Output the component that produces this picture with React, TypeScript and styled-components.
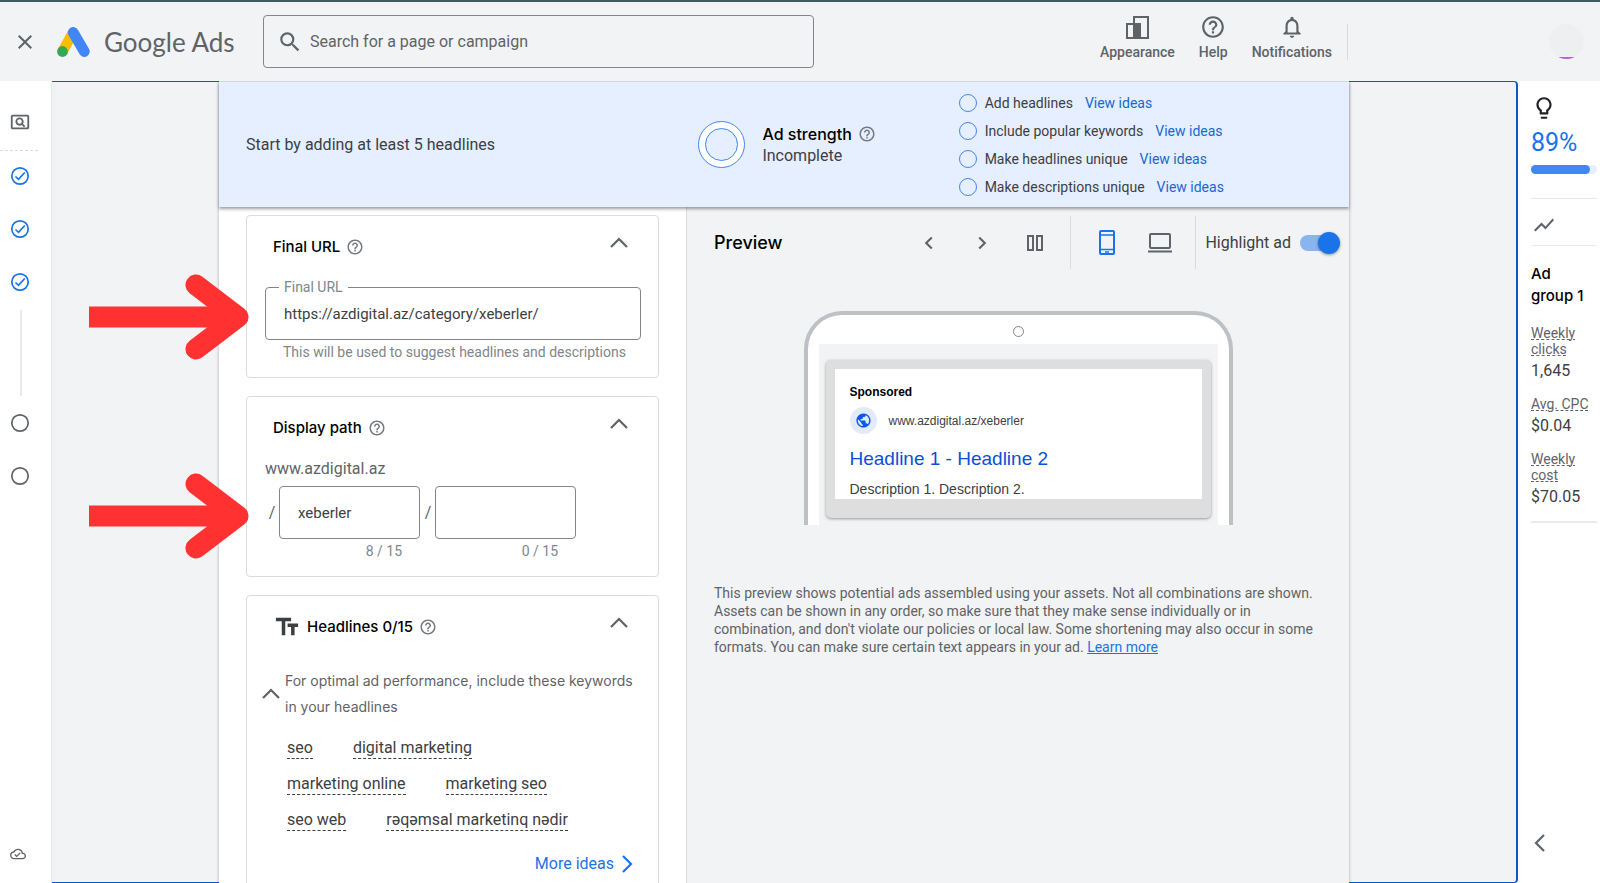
import React from 'react';
import styled, { createGlobalStyle, css } from 'styled-components';
import {
  MdClose,
  MdSearch,
  MdHelpOutline,
  MdNotificationsNone,
  MdOutlinePageview,
  MdOutlineCloudDone,
  MdOutlineLightbulb,
  MdShowChart,
  MdTextFields,
  MdPublic,
} from 'react-icons/md';

const color = {
  surface: '#f1f3f4',
  line: '#dadce0',
  softLine: '#e8eaed',
  text: '#3c4043',
  muted: '#5f6368',
  hint: '#80868b',
  blue: '#1a73e8',
  focus: '#0b57d0',
  tint: '#e6efff',
  arrow: '#ff3131',
};

const display = '"Inter", "Roboto", sans-serif';

const GlobalStyle = createGlobalStyle`
  *, *::before, *::after { box-sizing: border-box; }
  body {
    margin: 0;
    font-family: "Roboto", "Liberation Sans", sans-serif;
    font-size: 16px;
    color: ${color.text};
    background: #fff;
  }
  button, input { font: inherit; color: inherit; }
  a { text-decoration: none; color: ${color.blue}; }
  h1, h2, h3, p, ul, dl, dd { margin: 0; padding: 0; }
  svg { display: block; flex: none; }
`;

const Page = styled.div`
  display: flex;
  flex-direction: column;
  height: 100vh;
  overflow: hidden;
  border-top: 2px solid #3d5c5e;
`;

const IconButton = styled.button`
  display: flex;
  align-items: center;
  justify-content: center;
  padding: 0;
  border: 0;
  background: none;
  color: ${color.muted};
  cursor: pointer;
`;

/* Header */

const Header = styled.header`
  flex: none;
  display: flex;
  align-items: center;
  height: 79px;
  padding: 0 16px 0 13px;
  background: ${color.surface};
`;

const Brand = styled.a`
  display: flex;
  align-items: center;
  gap: 14px;
  width: 206px;
  margin-left: 20px;
  color: ${color.muted};
  font-family: "Lato", sans-serif;
  font-size: 26px;
  line-height: 32px;
  white-space: nowrap;
`;

const SearchBox = styled.label`
  display: flex;
  align-items: center;
  gap: 7px;
  flex: 0 1 551px;
  height: 53px;
  margin-right: auto;
  padding: 0 13px;
  border: 1px solid #80868b;
  border-radius: 4px;
  color: ${color.muted};

  input {
    flex: 1;
    min-width: 0;
    padding: 0;
    border: 0;
    outline: 0;
    background: none;
  }
  input::placeholder { color: ${color.muted}; opacity: 1; }
`;

const HeaderActions = styled.nav`
  display: flex;
  gap: 24px;
  padding: 0 15px 9px 0;
`;

const HeaderAction = styled.button`
  display: flex;
  flex-direction: column;
  align-items: center;
  gap: 3px;
  padding: 0;
  border: 0;
  background: none;
  color: ${color.muted};
  font-size: 14px;
  font-weight: 500;
  line-height: 18px;
`;

const HeaderDivider = styled.span`
  width: 1px;
  height: 36px;
  margin-right: 201px;
  background: ${color.line};
`;

const Avatar = styled.span`
  width: 35px;
  height: 35px;
  border-radius: 50%;
  background: linear-gradient(#eeeff1 33px, #b65fcf 33px);
`;

/* Frame around the editor */

const Body = styled.div`
  flex: 1;
  min-height: 0;
  display: flex;
`;

const StepRail = styled.nav`
  flex: none;
  display: flex;
  flex-direction: column;
  align-items: flex-start;
  width: 52px;
  padding: 30px 0 3px;
  border-right: 1px solid ${color.softLine};
`;

const RailItem = styled.button<{ $done?: boolean }>`
  display: flex;
  align-items: center;
  justify-content: center;
  width: 40px;
  height: 53px;
  padding: 0;
  border: 0;
  background: none;
  color: ${(p) => (p.$done ? color.blue : color.muted)};
`;

const RailTop = styled(RailItem)`
  height: 22px;
`;

const RailDash = styled.span`
  width: 38px;
  margin: 17px 0 -2px;
  border-top: 1px dashed ${color.line};
`;

const RailLine = styled.span`
  width: 2px;
  height: 86px;
  margin: 2px 0 0 20px;
  background: ${color.softLine};
`;

const RailFoot = styled(RailItem)`
  width: 36px;
  margin-top: auto;
`;

const Frame = styled.main`
  flex: 1;
  min-width: 0;
  display: flex;
  padding: 0 167px;
  background: ${color.surface};
  border: solid ${color.focus};
  border-width: 1px 2px 1px 0;
  border-radius: 0 4px 4px 0;
`;

const Editor = styled.div`
  flex: 1;
  min-width: 0;
  display: flex;
  flex-direction: column;
  margin: -1px 0;
  background: ${color.surface};
  border-top: 1px solid ${color.line};
  box-shadow: 0 0 3px rgba(60, 64, 67, 0.4);
  clip-path: inset(0 -4px 0 -140px);
`;

/* Ad strength banner */

const Strength = styled.section`
  position: relative;
  z-index: 1;
  flex: none;
  display: grid;
  grid-template-columns: 452fr 260fr 390fr;
  align-items: center;
  height: 125px;
  padding-left: 27px;
  background: ${color.tint};
  box-shadow: 0 2px 3px rgba(60, 64, 67, 0.5);

  a { color: #1967d2; }
`;

const StrengthMeter = styled.div`
  display: flex;
  align-items: center;
  gap: 17px;
  line-height: 22px;
`;

const Ring = styled.span`
  width: 47px;
  height: 47px;
  padding: 6px;
  border: 1px solid #4285f4;
  border-radius: 50%;
  background: #fff;

  &::before {
    content: '';
    display: block;
    height: 100%;
    border: 1px solid #4285f4;
    border-radius: 50%;
    background: ${color.tint};
  }
`;

const TitleText = styled.h2<{ $large?: boolean }>`
  display: flex;
  align-items: center;
  gap: 6px;
  color: #000;
  font-family: ${display};
  font-size: ${(p) => (p.$large ? 16 : 15)}px;
  font-weight: 500;
  line-height: 22px;

  svg { color: #74797e; }
`;

const Checklist = styled.ul`
  display: flex;
  flex-direction: column;
  gap: 8px;
  list-style: none;
  font-size: 14px;
  line-height: 20px;

  li { display: flex; align-items: center; }
  li::before {
    content: '';
    width: 18px;
    height: 18px;
    margin-right: 8px;
    border: 1px solid #4285f4;
    border-radius: 50%;
  }
  a { margin-left: 12px; }
`;

/* Form column */

const Columns = styled.div`
  flex: 1;
  min-height: 0;
  display: flex;
`;

const FormColumn = styled.form`
  flex: none;
  display: flex;
  flex-direction: column;
  gap: 18px;
  width: 467px;
  padding: 8px 27px 0;
  background: #fff;
`;

const Card = styled.section`
  position: relative;
  flex: none;
  padding: 0 17px 0 18px;
  border: 1px solid ${color.line};
  border-radius: 4px;
`;

const CardHead = styled.header`
  display: flex;
  align-items: center;
  justify-content: space-between;
  height: 62px;
  padding: 0 12px 0 8px;
`;

const Toggle = styled(IconButton)`
  align-self: flex-start;
  margin-top: 17px;
  height: 20px;
`;

const fieldBox = css`
  width: 100%;
  height: 53px;
  padding: 0 18px;
  border: 1px solid #80868b;
  border-radius: 4px;
  background: #fff;
  outline: 0;
  font-size: 15px;
`;

const Field = styled.div`
  position: relative;
  margin-top: 9px;

  input { ${fieldBox} }
  label {
    position: absolute;
    top: -9px;
    left: 14px;
    padding: 0 5px;
    background: #fff;
    color: ${color.hint};
    font-size: 14px;
    line-height: 18px;
  }
`;

const Hint = styled.p`
  padding: 2px 18px 15px;
  color: ${color.hint};
  font-size: 14px;
  line-height: 20px;
  white-space: nowrap;
`;

const Domain = styled.p`
  padding-bottom: 7px;
  color: ${color.muted};
  line-height: 20px;
`;

const PathRow = styled.div`
  display: flex;
  padding-bottom: 15px;
`;

const PathPart = styled.label`
  display: grid;
  grid-template-columns: 14px 141px;
  align-items: center;
  color: ${color.muted};

  & > span { text-align: center; }
  & + & { margin-left: 1px; }
  input { ${fieldBox} color: ${color.text}; }
  small {
    grid-column: 2;
    padding: 2px 18px 0;
    color: ${color.hint};
    font-size: 14px;
    line-height: 20px;
    text-align: right;
  }
`;

const Arrow = styled.svg`
  position: absolute;
  z-index: 2;
  right: calc(100% - 2px);
  top: 58px;
  pointer-events: none;
`;

const PathArrow = styled(Arrow)`
  top: 76px;
`;

const HeadlineTip = styled.div`
  display: flex;
  align-items: center;
  gap: 4px;
  margin: 10px -4px 0 -4px;
  color: ${color.muted};
  font-family: ${display};
  font-size: 14px;
  line-height: 26px;
`;

const Keywords = styled.ul`
  display: flex;
  flex-wrap: wrap;
  gap: 15px 40px;
  max-width: 330px;
  margin: 18px 0 0 22px;
  list-style: none;

  li { height: 21px; line-height: 20px; }
  button {
    padding: 0;
    border: 0;
    border-bottom: 1px dashed ${color.text};
    background: none;
    line-height: 20px;
    white-space: nowrap;
  }
`;

const MoreIdeas = styled.a`
  display: flex;
  align-items: center;
  justify-content: flex-end;
  gap: 3px;
  margin-top: 22px;
  padding-right: 4px;
  line-height: 22px;
`;

const CardTail = styled.div`
  height: 40px;
`;

/* Preview column */

const Preview = styled.section`
  flex: 1;
  min-width: 0;
  padding: 9px 27px 0;
  border-left: 1px solid ${color.line};
`;

const Toolbar = styled.div`
  display: flex;
  align-items: center;
  height: 53px;
  margin-right: -18px;

  h2 {
    margin-right: auto;
    color: #000;
    font-family: ${display};
    font-size: 18px;
    font-weight: 500;
  }
`;

const ToolGroup = styled.div`
  display: flex;
  align-items: center;
  height: 100%;
  padding: 0 9px;
  border-right: 1px solid ${color.line};

  button { width: 53px; height: 53px; }
`;

const Switch = styled.label`
  display: flex;
  align-items: center;
  gap: 9px;
  padding-left: 9px;
  white-space: nowrap;

  input {
    appearance: none;
    display: flex;
    align-items: center;
    justify-content: flex-end;
    width: 40px;
    height: 16px;
    margin: 0;
    border-radius: 8px;
    background: linear-gradient(#8ab4f0, #8ab4f0) left / 34px 16px no-repeat;
  }
  input::before {
    content: '';
    width: 22px;
    height: 22px;
    margin: -3px 0;
    border-radius: 50%;
    background: ${color.blue};
    box-shadow: 0 1px 3px rgba(0, 0, 0, 0.4);
  }
`;

const Phone = styled.div`
  width: 429px;
  height: 214px;
  margin: 42px auto 0;
  padding: 0 11px;
  background: #fff;
  border: 4px solid #bdc1c6;
  border-bottom: 0;
  border-radius: 38px 38px 0 0;
`;

const PhoneTop = styled.div`
  display: flex;
  align-items: center;
  justify-content: center;
  height: 29px;

  &::before {
    content: '';
    width: 11px;
    height: 11px;
    margin-top: 3px;
    border: 1px solid #80868b;
    border-radius: 50%;
  }
`;

const Screen = styled.div`
  height: 181px;
  padding: 16px 7px 0;
  background: ${color.surface};
`;

const AdShell = styled.div`
  height: 158px;
  padding: 9px;
  border-radius: 5px;
  background: #dedede;
  box-shadow: 0 1px 3px rgba(60, 64, 67, 0.5);
`;

const Ad = styled.article`
  height: 130px;
  padding: 14px 15px;
  background: #fff;
  overflow: hidden;
  font-family: "Liberation Sans", Arial, sans-serif;
  font-size: 12px;

  strong { display: block; color: #000; line-height: 18px; }
  h3 { margin-top: 13px; font-size: 19px; font-weight: 400; line-height: 24px; }
  h3 a { color: #0b4fd8; }
  p { margin-top: 8px; font-size: 14px; line-height: 20px; }
`;

const AdSource = styled.div`
  display: flex;
  align-items: center;
  gap: 12px;
  margin-top: 6px;

  span {
    display: flex;
    align-items: center;
    justify-content: center;
    width: 27px;
    height: 27px;
    border-radius: 50%;
    background: #e1ebfd;
    color: #0b57ea;
  }
`;

const Disclaimer = styled.p`
  padding: 59px 5px 0 0;
  color: ${color.muted};
  font-size: 14px;
  line-height: 18px;

  a { text-decoration: underline; }
`;

/* Right-hand summary */

const Summary = styled.aside`
  flex: none;
  display: flex;
  flex-direction: column;
  align-items: flex-start;
  width: 82px;
  padding: 14px 3px 30px 13px;
`;

const Score = styled.p`
  margin-top: 8px;
  color: ${color.blue};
  font-size: 25px;
  line-height: 28px;
`;

const Meter = styled.div`
  width: 100%;
  height: 9px;
  margin: 8px 0 24px;
  border-radius: 5px;
  background: ${color.tint};

  &::before {
    content: '';
    display: block;
    width: 89%;
    height: 100%;
    border-radius: 5px;
    background: #4285f4;
  }
`;

const Rule = styled.hr<{ $thick?: boolean }>`
  width: 100%;
  margin: 0;
  border: 0;
  border-top: ${(p) => (p.$thick ? 2 : 1)}px solid ${color.softLine};
`;

const ChartRow = styled.div`
  display: flex;
  align-items: center;
  height: 46px;
  padding: 6px 0 0 1px;
  color: ${color.muted};
`;

const GroupName = styled.h2`
  margin: 17px 0 18px;
  color: #000;
  font-family: ${display};
  font-size: 15px;
  font-weight: 500;
  line-height: 22px;
`;

const Stats = styled.dl`
  margin-bottom: 10px;

  dt {
    color: ${color.muted};
    font-size: 14px;
    line-height: 16px;
    text-decoration: underline dashed 1px;
    text-underline-offset: 1px;
    white-space: nowrap;
  }
  dd { margin-bottom: 11px; line-height: 28px; }
  dd:last-child { margin-bottom: 0; }
`;

const CollapseButton = styled(IconButton)`
  margin: auto 0 0 -1px;
`;

const HelpIcon = () => <MdHelpOutline size={18} aria-label="Help" />;

type Direction = 'up' | 'left' | 'right';
const chevronPath: Record<Direction, string> = {
  up: 'M2 14 L10 6 L18 14',
  left: 'M14 2 L6 10 L14 18',
  right: 'M6 2 L14 10 L6 18',
};

const Chevron = ({ to, size = 20 }: { to: Direction; size?: number }) => (
  <svg width={size} height={size} viewBox="0 0 20 20" fill="none" stroke="currentColor" strokeWidth={size < 20 ? 3 : 2.2} aria-hidden="true">
    <path d={chevronPath[to]} />
  </svg>
);

const arrowShape = (
  <g fill="none" stroke={color.arrow} strokeWidth="21">
    <path d="M0 43 H140" />
    <path d="M107 11 L149 43 L107 75" strokeLinecap="round" strokeLinejoin="round" />
  </g>
);

const AdsLogo = () => (
  <svg width="33" height="30" viewBox="0 0 33 30" aria-hidden="true">
    <path d="M5.500 24.500 L16 5.500" stroke="#fbbc04" strokeWidth="10.500" />
    <path d="M16.200 5.500 L27.300 24.500" stroke="#4285f4" strokeWidth="10.800" strokeLinecap="round" />
    <circle cx="5.500" cy="24.500" r="5.400" fill="#34a853" />
  </svg>
);

const AppearanceIcon = () => (
  <svg width="26" height="26" viewBox="0 0 26 26" aria-hidden="true">
    <path d="M10 3 H24 V24 H3 V10 H10 Z" fill="none" stroke="currentColor" strokeWidth="2" />
    <path d="M9 9 H17 V24 H9 Z" fill="currentColor" />
  </svg>
);

const ColumnsIcon = () => (
  <svg width="16" height="16" viewBox="0 0 16 16" fill="none" stroke="currentColor" strokeWidth="2" aria-hidden="true">
    <path d="M1 1 H6 V15 H1 Z M10 1 H15 V15 H10 Z" />
  </svg>
);

const PhoneIcon = () => (
  <svg width="16" height="25" viewBox="0 0 16 25" fill="none" stroke={color.blue} strokeWidth="2" aria-hidden="true">
    <rect x="1" y="1" width="14" height="23" rx="1" />
    <path d="M1 5 H15 M1 19.500 H15" strokeWidth="1.500" />
    <path d="M6 22 H10" strokeWidth="1.500" />
  </svg>
);

const LaptopIcon = () => (
  <svg width="24" height="20" viewBox="0 0 24 20" fill="none" stroke="currentColor" strokeWidth="2" aria-hidden="true">
    <rect x="2" y="1" width="20" height="14" rx="1" />
    <path d="M0 18.500 H24" />
  </svg>
);

const StepIcon = ({ done }: { done: boolean }) => (
  <svg width="20" height="20" viewBox="0 0 20 20" fill="none" stroke="currentColor" strokeWidth="1.700" aria-hidden="true">
    <circle cx="10" cy="10" r="8.200" />
    {done && <path d="M5.500 10.500 L8.500 13.300 L14.800 6.500" />}
  </svg>
);

const suggestions = ['Add headlines', 'Include popular keywords', 'Make headlines unique', 'Make descriptions unique'];
const keywords = ['seo', 'digital marketing', 'marketing online', 'marketing seo', 'seo web', 'rəqəmsal marketinq nədir'];

export default function App() {
  return (
    <>
      <GlobalStyle />
      <Page>
        <Header>
          <IconButton aria-label="Close">
            <MdClose size={24} />
          </IconButton>
          <Brand href="#">
            <AdsLogo />
            Google Ads
          </Brand>
          <SearchBox>
            <MdSearch size={26} />
            <input aria-label="Search" placeholder="Search for a page or campaign" />
          </SearchBox>
          <HeaderActions>
            <HeaderAction>
              <AppearanceIcon />
              Appearance
            </HeaderAction>
            <HeaderAction>
              <MdHelpOutline size={26} />
              Help
            </HeaderAction>
            <HeaderAction>
              <MdNotificationsNone size={26} />
              Notifications
            </HeaderAction>
          </HeaderActions>
          <HeaderDivider />
          <Avatar />
        </Header>

        <Body>
          <StepRail aria-label="Campaign steps">
            <RailTop aria-label="Overview">
              <MdOutlinePageview size={22} />
            </RailTop>
            <RailDash />
            {[1, 2, 3].map((n) => (
              <RailItem key={n} $done aria-label={`Step ${n}, done`}>
                <StepIcon done />
              </RailItem>
            ))}
            <RailLine />
            {[4, 5].map((n) => (
              <RailItem key={n} aria-label={`Step ${n}`}>
                <StepIcon done={false} />
              </RailItem>
            ))}
            <RailFoot aria-label="Saved">
              <MdOutlineCloudDone size={16} />
            </RailFoot>
          </StepRail>

          <Frame>
            <Editor>
              <Strength>
                <p>Start by adding at least 5 headlines</p>
                <StrengthMeter>
                  <Ring />
                  <div>
                    <TitleText $large>
                      Ad strength <HelpIcon />
                    </TitleText>
                    <p>Incomplete</p>
                  </div>
                </StrengthMeter>
                <Checklist>
                  {suggestions.map((s) => (
                    <li key={s}>
                      {s}
                      <a href="#">View ideas</a>
                    </li>
                  ))}
                </Checklist>
              </Strength>

              <Columns>
                <FormColumn>
                  <Card>
                    <CardHead>
                      <TitleText>
                        Final URL <HelpIcon />
                      </TitleText>
                      <Toggle type="button" aria-label="Collapse final URL">
                        <Chevron to="up" />
                      </Toggle>
                    </CardHead>
                    <Field>
                      <input id="final-url" defaultValue="https://azdigital.az/category/xeberler/" />
                      <label htmlFor="final-url">Final URL</label>
                    </Field>
                    <Hint>This will be used to suggest headlines and descriptions</Hint>
                    <Arrow width="160" height="86" viewBox="0 0 160 86" aria-hidden="true">
                      {arrowShape}
                    </Arrow>
                  </Card>

                  <Card>
                    <CardHead>
                      <TitleText>
                        Display path <HelpIcon />
                      </TitleText>
                      <Toggle type="button" aria-label="Collapse display path">
                        <Chevron to="up" />
                      </Toggle>
                    </CardHead>
                    <Domain>www.azdigital.az</Domain>
                    <PathRow>
                      <PathPart>
                        <span>/</span>
                        <input aria-label="Path 1" defaultValue="xeberler" />
                        <small>8 / 15</small>
                      </PathPart>
                      <PathPart>
                        <span>/</span>
                        <input aria-label="Path 2" />
                        <small>0 / 15</small>
                      </PathPart>
                    </PathRow>
                    <PathArrow width="160" height="86" viewBox="0 0 160 86" aria-hidden="true">
                      {arrowShape}
                    </PathArrow>
                  </Card>

                  <Card>
                    <CardHead>
                      <TitleText>
                        <MdTextFields size={28} color={color.text} />
                        Headlines 0/15 <HelpIcon />
                      </TitleText>
                      <Toggle type="button" aria-label="Collapse headlines">
                        <Chevron to="up" />
                      </Toggle>
                    </CardHead>
                    <HeadlineTip>
                      <IconButton type="button" aria-label="Hide keywords">
                        <Chevron to="up" />
                      </IconButton>
                      <p>For optimal ad performance, include these keywords in your headlines</p>
                    </HeadlineTip>
                    <Keywords>
                      {keywords.map((k) => (
                        <li key={k}>
                          <button type="button">{k}</button>
                        </li>
                      ))}
                    </Keywords>
                    <MoreIdeas href="#">
                      More ideas <Chevron to="right" />
                    </MoreIdeas>
                    <CardTail />
                  </Card>
                </FormColumn>

                <Preview>
                  <Toolbar>
                    <h2>Preview</h2>
                    <ToolGroup>
                      <IconButton aria-label="Previous">
                        <Chevron to="left" size={14} />
                      </IconButton>
                      <IconButton aria-label="Next">
                        <Chevron to="right" size={14} />
                      </IconButton>
                      <IconButton aria-label="Side by side">
                        <ColumnsIcon />
                      </IconButton>
                    </ToolGroup>
                    <ToolGroup>
                      <IconButton aria-label="Mobile">
                        <PhoneIcon />
                      </IconButton>
                      <IconButton aria-label="Desktop">
                        <LaptopIcon />
                      </IconButton>
                    </ToolGroup>
                    <Switch>
                      Highlight ad
                      <input type="checkbox" role="switch" defaultChecked />
                    </Switch>
                  </Toolbar>
                  <Phone>
                    <PhoneTop />
                    <Screen>
                      <AdShell>
                        <Ad>
                          <strong>Sponsored</strong>
                          <AdSource>
                            <span>
                              <MdPublic size={17} />
                            </span>
                            www.azdigital.az/xeberler
                          </AdSource>
                          <h3>
                            <a href="#">Headline 1 - Headline 2</a>
                          </h3>
                          <p>Description 1. Description 2.</p>
                        </Ad>
                      </AdShell>
                    </Screen>
                  </Phone>
                  <Disclaimer>
                    This preview shows potential ads assembled using your assets. Not all combinations are shown. Assets can be
                    shown in any order, so make sure that they make sense individually or in combination, and don't violate our
                    policies or local law. Some shortening may also occur in some formats. You can make sure certain text appears
                    in your ad. <a href="#">Learn more</a>
                  </Disclaimer>
                </Preview>
              </Columns>
            </Editor>
          </Frame>

          <Summary>
            <MdOutlineLightbulb size={26} color="#202124" />
            <Score>89%</Score>
            <Meter />
            <Rule />
            <ChartRow>
              <MdShowChart size={24} />
            </ChartRow>
            <Rule />
            <GroupName>
              Ad
              <br />
              group 1
            </GroupName>
            <Stats>
              <dt>
                Weekly
                <br />
                clicks
              </dt>
              <dd>1,645</dd>
              <dt>Avg. CPC</dt>
              <dd>$0.04</dd>
              <dt>
                Weekly
                <br />
                cost
              </dt>
              <dd>$70.05</dd>
            </Stats>
            <Rule $thick />
            <CollapseButton aria-label="Expand summary">
              <Chevron to="left" />
            </CollapseButton>
          </Summary>
        </Body>
      </Page>
    </>
  );
}
